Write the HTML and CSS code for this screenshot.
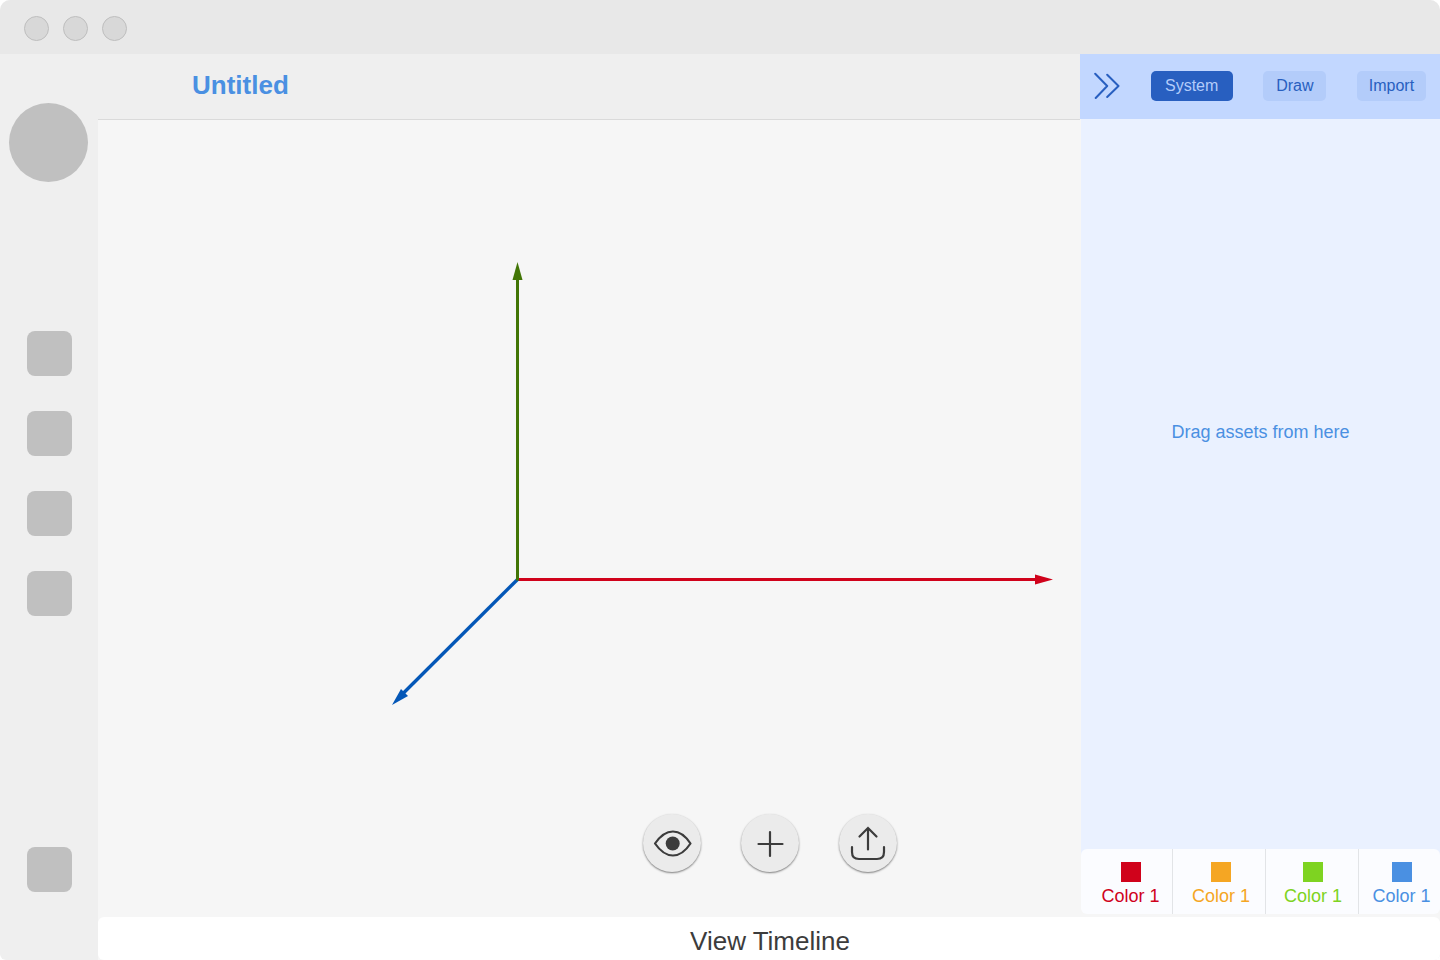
FILE: index.html
```html
<!DOCTYPE html>
<html lang="en">
<head>
<meta charset="utf-8">
<meta name="viewport" content="width=device-width, initial-scale=1">
<title>Untitled</title>
<link rel="stylesheet" href="styles.css">
</head>
<body>
<div class="window">
  <header class="titlebar">
    <button class="light" type="button" aria-label="Close"></button>
    <button class="light" type="button" aria-label="Minimize"></button>
    <button class="light" type="button" aria-label="Zoom"></button>
  </header>
  <div class="body">
    <nav class="sidebar" aria-label="Main">
      <button class="avatar" type="button" aria-label="Account"></button>
      <div class="shortcuts">
        <button class="tile" type="button" aria-label="Shortcut 1"></button>
        <button class="tile" type="button" aria-label="Shortcut 2"></button>
        <button class="tile" type="button" aria-label="Shortcut 3"></button>
        <button class="tile" type="button" aria-label="Shortcut 4"></button>
      </div>
      <button class="tile" type="button" aria-label="Settings"></button>
    </nav>
    <div class="workspace">
      <div class="stage">
        <main class="editor">
          <div class="editor-head"><h1 class="title">Untitled</h1></div>
          <div class="canvas">
            <svg class="axes" viewBox="98 120 982 797" preserveAspectRatio="xMidYMid meet" role="img" aria-label="3D axes">
              <g fill="#d0021b" stroke="#d0021b"><path d="M518 579.5H1037" stroke-width="3"/><path d="M1035 574.5L1053 579.5L1035 584.5Z" stroke="none"/></g>
              <g fill="#0457b7" stroke="#0457b7"><path d="M517.5 579.5L403 693.5" stroke-width="3.4"/><path d="M392 705L401 689L408 696Z" stroke="none"/></g>
              <g fill="#417505" stroke="#417505"><path d="M517.5 580.5V278" stroke-width="3"/><path d="M517.5 262L522.5 280H512.5Z" stroke="none"/></g>
            </svg>
          </div>
        </main>
        <aside class="panel" aria-label="Assets">
          <div class="panel-head">
            <button class="collapse" type="button" aria-label="Collapse panel">
              <svg class="chevrons" viewBox="0 0 26 28"><path d="M1.2 1.7L13.2 14L1.7 26M13.2 2.7L24.5 14L13.2 25"/></svg>
            </button>
            <button class="tab tab-system" type="button">System</button>
            <button class="tab tab-draw" type="button">Draw</button>
            <button class="tab tab-import" type="button">Import</button>
          </div>
          <div class="assets"><p class="hint">Drag assets from here</p></div>
          <div class="palette-wrap">
            <div class="palette">
              <button class="color red" type="button"><span class="swatch"></span>Color 1</button>
              <button class="color orange" type="button"><span class="swatch"></span>Color 1</button>
              <button class="color green" type="button"><span class="swatch"></span>Color 1</button>
              <button class="color blue" type="button"><span class="swatch"></span>Color 1</button>
            </div>
          </div>
        </aside>
        <div class="tools">
          <button class="tool" type="button" aria-label="Preview">
            <svg class="tool-icon" viewBox="1 1 58 58"><path d="M13 30.500C24 14.500 38 14.500 48.500 30.500C38 46.500 24 46.500 13 30.500Z" stroke-linejoin="round"/><circle cx="30.700" cy="30.500" r="7" fill="#3c3c3c" stroke="none"/></svg>
          </button>
          <button class="tool" type="button" aria-label="Add">
            <svg class="tool-icon" viewBox="1 1 58 58"><path d="M30 19V43M18.500 31H42.500"/></svg>
          </button>
          <button class="tool" type="button" aria-label="Export">
            <svg class="tool-icon" viewBox="1 1 58 58"><path d="M30 36.500V15M21.500 23.500L30 15L38.500 23.500M14 34V39Q14 46 21 46H39Q46 46 46 39V34"/></svg>
          </button>
        </div>
      </div>
      <button class="timeline" type="button">View Timeline</button>
    </div>
  </div>
</div>
</body>
</html>
```

FILE: styles.css
```css
* { box-sizing: border-box; }

body {
  margin: 0;
  background: #fff;
  font-family: "Liberation Sans", Arial, sans-serif;
}

button {
  margin: 0;
  padding: 0;
  border: 0;
  background: none;
  font: inherit;
  cursor: pointer;
}

svg { display: block; }

.window {
  display: flex;
  flex-direction: column;
  min-height: 100vh;
  overflow: hidden;
  border-radius: 10px 10px 6px 6px;
  background: #f6f6f6;
}

.titlebar {
  display: flex;
  align-items: center;
  gap: 14px;
  height: 54px;
  padding: 2px 24px 0;
  background: #e8e8e8;
}

.light {
  width: 25px;
  height: 25px;
  border: 1px solid #bebebe;
  border-radius: 50%;
  background: #d8d8d8;
}

.body {
  display: flex;
  flex: 1;
}

.sidebar {
  display: flex;
  flex-direction: column;
  align-items: center;
  width: 98px;
  padding: 49px 0 68px;
  border-radius: 0 0 0 6px;
  background: #efefef;
}

.avatar {
  width: 79px;
  height: 79px;
  margin-right: 1px;
  border-radius: 50%;
  background: #c0c0c0;
}

.shortcuts {
  display: flex;
  flex: 1;
  flex-direction: column;
  gap: 35px;
  padding: 149px 0 35px;
}

.tile {
  width: 45px;
  height: 45px;
  border-radius: 8px;
  background: #c0c0c0;
}

.workspace {
  display: flex;
  flex: 1;
  flex-direction: column;
  min-width: 0;
}

.stage {
  position: relative;
  display: flex;
  flex: 1;
}

.editor {
  display: flex;
  flex: 1;
  flex-direction: column;
  min-width: 0;
}

.editor-head {
  display: flex;
  align-items: center;
  height: 66px;
  padding: 0 94px 4px;
  border-bottom: 1px solid #dadada;
  background: #efefef;
}

.title {
  margin: 0;
  color: #4a90e2;
  font-size: 26px;
  line-height: 30px;
}

.canvas {
  position: relative;
  flex: 1;
}

.axes {
  position: absolute;
  width: 100%;
  height: 100%;
}

.panel {
  display: flex;
  flex-direction: column;
  width: 360px;
}

.panel-head {
  display: flex;
  align-items: center;
  justify-content: space-between;
  height: 65px;
  padding: 0 14px 2px;
  background: #c2d7ff;
}

.chevrons {
  width: 26px;
  height: 28px;
  fill: none;
  stroke: #285fc0;
  stroke-width: 2;
  stroke-linecap: round;
  stroke-linejoin: round;
}

.tab {
  height: 30px;
  border-radius: 5px;
  background: #b3ccfa;
  color: #285fc0;
  font-size: 16px;
  line-height: 30px;
}

.tab-system {
  width: 82px;
  background: #285fc0;
  color: #b3ccfa;
}

.tab-draw { width: 63px; }
.tab-import { width: 69px; }

.assets {
  flex: 1;
  margin-left: 1px;
  padding: 302px 0 0;
  background: #eaf1ff;
}

.hint {
  margin: 0;
  color: #4a90e2;
  font-size: 18px;
  line-height: 22px;
  text-align: center;
}

.palette-wrap {
  margin-left: 1px;
  padding-bottom: 3px;
  background: linear-gradient(#eaf1ff 50%, #f6f6f6 50%);
}

.palette {
  display: grid;
  grid-template-columns: 92fr 93fr 93fr 81fr;
  height: 65px;
  overflow: hidden;
  border-radius: 6px;
  background: #fbfcff;
}

.color {
  display: flex;
  flex-direction: column;
  align-items: center;
  gap: 4px;
  padding-top: 13px;
  border-right: 1px solid #e2e4e7;
  font-size: 18px;
  line-height: 20px;
}

.swatch {
  width: 20px;
  height: 20px;
  background: currentColor;
}

.red { padding-left: 8px; color: #d0021b; }
.orange { padding-left: 4px; color: #f5a623; }
.green { padding-left: 2px; color: #7ed321; }
.blue { padding-left: 4px; border-right: 0; color: #4a90e2; }

.tools {
  position: absolute;
  right: 0;
  bottom: 45px;
  left: 2px;
  display: flex;
  justify-content: center;
  gap: 40px;
  pointer-events: none;
}

.tool {
  width: 58px;
  height: 58px;
  border-radius: 50%;
  background: #ebebeb;
  box-shadow: 0 1px 2px rgba(0, 0, 0, 0.5);
  pointer-events: auto;
}

.tool-icon {
  width: 58px;
  height: 58px;
  fill: none;
  stroke: #3c3c3c;
  stroke-width: 2.2;
  stroke-linecap: round;
}

.timeline {
  height: 43px;
  padding: 5px 0 0 2px;
  border-radius: 6px;
  background: #fff;
  color: #3c3c3c;
  font-size: 26px;
  line-height: 30px;
}
```
